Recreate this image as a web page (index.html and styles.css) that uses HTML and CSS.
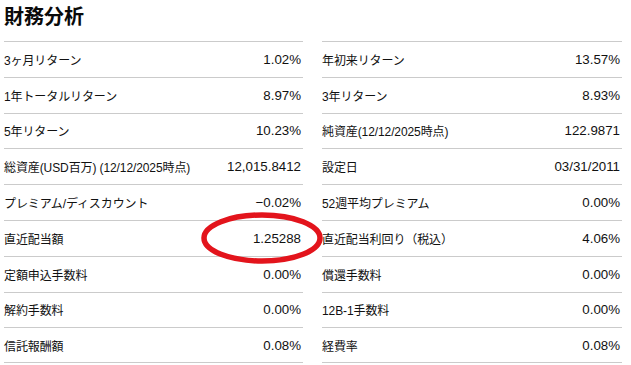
FILE: index.html
```html
<!DOCTYPE html>
<html lang="ja">
<head>
<meta charset="utf-8">
<link rel="stylesheet" href="styles.css">
</head>
<body>
<div class="page">
  <h1 class="title">財務分析</h1>
  <div class="grid">
    <div class="cell"><span class="label">3ヶ月リターン</span><span class="value">1.02%</span></div>
    <div class="cell"><span class="label">年初来リターン</span><span class="value">13.57%</span></div>
    <div class="cell"><span class="label">1年トータルリターン</span><span class="value">8.97%</span></div>
    <div class="cell"><span class="label">3年リターン</span><span class="value">8.93%</span></div>
    <div class="cell"><span class="label">5年リターン</span><span class="value">10.23%</span></div>
    <div class="cell"><span class="label">純資産(12/12/2025時点)</span><span class="value">122.9871</span></div>
    <div class="cell"><span class="label">総資産(USD百万) (12/12/2025時点)</span><span class="value">12,015.8412</span></div>
    <div class="cell"><span class="label">設定日</span><span class="value">03/31/2011</span></div>
    <div class="cell"><span class="label">プレミアム/ディスカウント</span><span class="value">−0.02%</span></div>
    <div class="cell"><span class="label">52週平均プレミアム</span><span class="value">0.00%</span></div>
    <div class="cell highlight"><span class="label">直近配当額</span><span class="value">1.25288</span>
      <svg class="circle" width="130" height="58" viewBox="0 0 130 58"><ellipse cx="64" cy="28" rx="58" ry="23" fill="none" stroke="#e3141c" stroke-width="5.5"/></svg>
    </div>
    <div class="cell"><span class="label">直近配当利回り（税込）</span><span class="value">4.06%</span></div>
    <div class="cell"><span class="label">定額申込手数料</span><span class="value">0.00%</span></div>
    <div class="cell"><span class="label">償還手数料</span><span class="value">0.00%</span></div>
    <div class="cell"><span class="label">解約手数料</span><span class="value">0.00%</span></div>
    <div class="cell"><span class="label">12B-1手数料</span><span class="value">0.00%</span></div>
    <div class="cell last"><span class="label">信託報酬額</span><span class="value">0.08%</span></div>
    <div class="cell last"><span class="label">経費率</span><span class="value">0.08%</span></div>
  </div>
</div>
</body>
</html>
```
FILE: styles.css
```css
html, body {
  margin: 0;
  padding: 0;
  background: #ffffff;
}
.page {
  padding: 0 9px 0 4px;
  font-family: "Liberation Sans", "Noto Sans CJK JP", sans-serif;
  color: #111111;
}
.title {
  margin: 0;
  padding-top: 2px;
  height: 39px;
  font-size: 20px;
  line-height: 28px;
  font-weight: 700;
  font-family: "Noto Sans CJK JP", sans-serif;
  color: #0a0a0a;
}
.grid {
  display: grid;
  grid-template-columns: 299px 300px;
  column-gap: 19px;
  grid-auto-rows: 35.8px;
}
.cell {
  position: relative;
  display: flex;
  align-items: center;
  justify-content: space-between;
  border-top: 1px solid #cbcbcb;
  padding: 0 2px 0 0;
}
.cell.last {
  border-bottom: 1px solid #cbcbcb;
}
.label {
  font-size: 12px;
  letter-spacing: -0.1px;
}
.value {
  font-size: 13.3px;
}
.circle {
  position: absolute;
  left: 194px;
  top: -11px;
  pointer-events: none;
  z-index: 1;
}
```
